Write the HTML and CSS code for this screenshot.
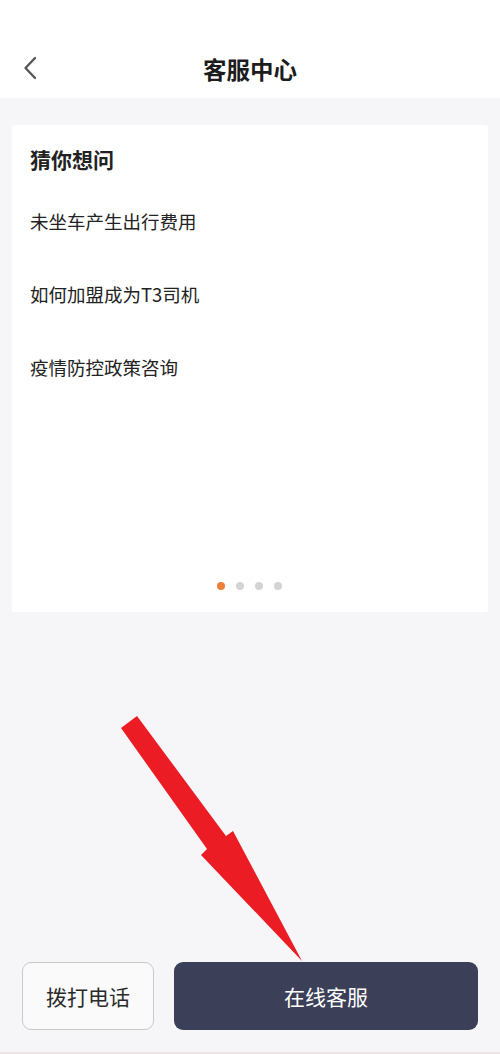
FILE: index.html
```html
<!DOCTYPE html>
<html lang="zh-CN">
<head>
<meta charset="utf-8">
<title>客服中心</title>
<link rel="stylesheet" href="styles.css">
</head>
<body>
<div class="page">
  <header class="header">
    <div class="back">
      <svg width="16" height="24" viewBox="0 0 16 24"><path d="M12 2 L2.5 12 L12 22" fill="none" stroke="#555" stroke-width="2.3" stroke-linecap="round" stroke-linejoin="round"/></svg>
    </div>
    <h1 class="title">客服中心</h1>
    <div></div>
  </header>
  <main class="main">
    <section class="card">
      <h2 class="card-title">猜你想问</h2>
      <ul class="list">
        <li class="item">未坐车产生出行费用</li>
        <li class="item">如何加盟成为T3司机</li>
        <li class="item">疫情防控政策咨询</li>
      </ul>
      <div class="dots">
        <span class="dot active"></span>
        <span class="dot"></span>
        <span class="dot"></span>
        <span class="dot"></span>
      </div>
    </section>
    <div class="spacer"></div>
    <footer class="footer">
      <button class="btn btn-call">拨打电话</button>
      <button class="btn btn-online">在线客服</button>
    </footer>
  </main>
  <svg class="arrow" width="500" height="1054" viewBox="0 0 500 1054">
    <polygon points="121,728 137,716 226,836 233,831 302,961 201,855 207,849" fill="#ec1c24"/>
  </svg>
</div>
</body>
</html>
```

FILE: styles.css
```css
* { box-sizing: border-box; }
html, body { margin: 0; padding: 0; }
body {
  font-family: "Noto Sans CJK SC", "Noto Sans", sans-serif;
  background: #f6f6f9;
}
.page {
  position: relative;
  width: 500px;
  height: 1054px;
  display: flex;
  flex-direction: column;
  background: #f6f6f9;
  border-bottom: 2px solid #f1e4e6;
  overflow: hidden;
}
.header {
  height: 98px;
  background: #fff;
  display: grid;
  grid-template-columns: 80px 1fr 80px;
  align-items: start;
  padding-top: 53px;
  flex: none;
}
.back {
  padding-left: 23px;
  padding-top: 3px;
  height: 30px;
}
.back svg { display: block; }
.title {
  margin: 0;
  text-align: center;
  font-size: 23.5px;
  line-height: 32px;
  font-weight: 700;
  color: #1c1c1e;
}
.main {
  flex: 1;
  display: flex;
  flex-direction: column;
}
.card {
  margin: 27px 12px 0;
  height: 487px;
  background: #fff;
  border-radius: 3px;
  padding: 20px 18px 22px;
  display: flex;
  flex-direction: column;
}
.card-title {
  margin: 0;
  font-size: 21px;
  line-height: 28px;
  font-weight: 700;
  color: #222;
}
.list {
  list-style: none;
  margin: 11px 0 0;
  padding: 0;
}
.item {
  height: 73px;
  display: flex;
  align-items: center;
  font-size: 18.5px;
  color: #222;
}
.dots {
  margin-top: auto;
  display: flex;
  justify-content: center;
  gap: 11px;
  padding-right: 1px;
}
.dot {
  width: 8px;
  height: 8px;
  border-radius: 50%;
  background: #d4d4d6;
}
.dot.active { background: #ee7f38; }
.spacer { flex: 1; }
.footer {
  display: flex;
  gap: 20px;
  padding: 0 22px 22px;
}
.btn {
  height: 68px;
  font-family: inherit;
  font-size: 21px;
  border-radius: 9px;
  cursor: pointer;
}
.btn-call {
  width: 132px;
  background: #fafafb;
  border: 1px solid #c9c9cc;
  color: #2a2a2a;
}
.btn-online {
  flex: 1;
  background: #3b3f58;
  border: none;
  color: #fff;
}
.arrow {
  position: absolute;
  left: 0;
  top: 0;
  pointer-events: none;
}
```
